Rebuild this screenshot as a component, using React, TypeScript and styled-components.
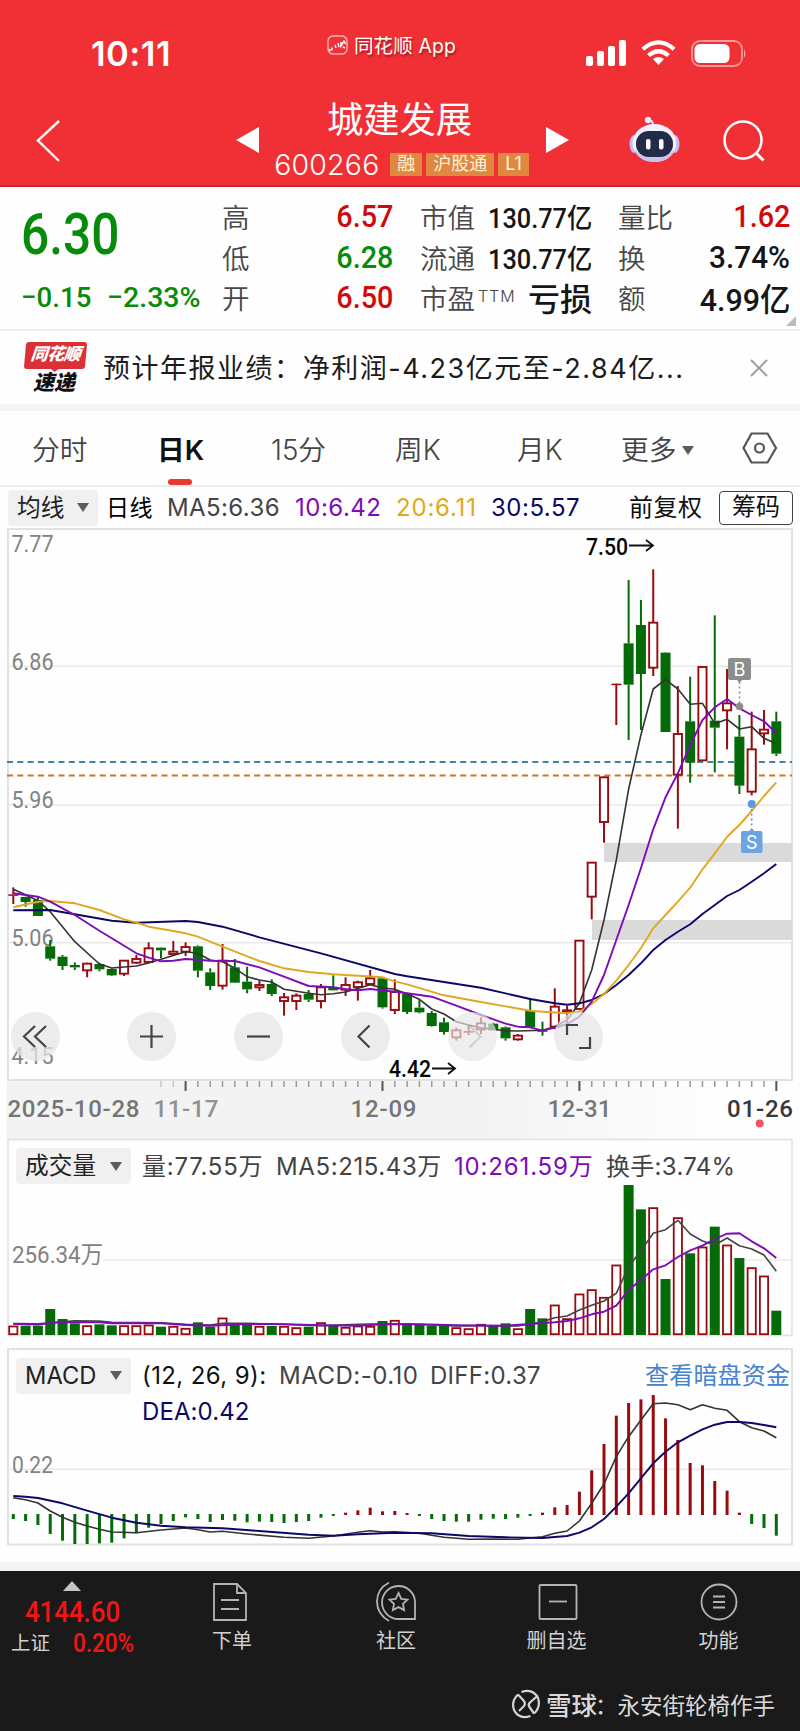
import React from "react";
import styled, { createGlobalStyle } from "styled-components";

const Global = createGlobalStyle`
  * { box-sizing: border-box; }
  body { margin: 0; background: #fff; }
`;

const SANS = `Inter, "Noto Sans CJK SC", sans-serif`;
const DIN = `Roboto, "Noto Sans CJK SC", sans-serif`;
const RED = "#d00a0a";
const GREEN = "#078b0a";
const PURPLE = "#7d0bb8";
const NAVY = "#0c0867";
const GOLD = "#e0a820";

const Page = styled.div`
  width: 800px;
  height: 1731px;
  overflow: hidden;
  display: flex;
  flex-direction: column;
  background: #fefefe;
  font-family: ${SANS};
  color: #222;
  white-space: nowrap;
`;

/* ---------- header ---------- */
const Header = styled.header`
  height: 187px;
  background: #f13035;
  border-bottom: 2px solid #c8282e;
  color: #fff;
`;
const StatusBar = styled.div`
  height: 92px;
  padding-top: 14px;
  display: grid;
  grid-template-columns: 91px 236px 259px 55px 50px 109px;
  align-items: center;
`;
const Clock = styled.div`
  font-size: 34.5px;
  font-weight: 600;
  letter-spacing: 0.5px;
`;
const AppMark = styled.div`
  display: flex;
  align-items: center;
  gap: 6px;
  margin-top: -17px;
  font-size: 19.5px;
  letter-spacing: 0.1px;
  text-shadow: 1px 2px 2px rgba(80, 0, 0, 0.5);
`;
const NavBar = styled.div`
  height: 93px;
  display: grid;
  grid-template-columns: 236px 26px 280px 85px 93px 80px;
`;
const NavSlot = styled.div<{ $top: number; $left?: number }>`
  padding-top: ${(p) => p.$top}px;
  padding-left: ${(p) => p.$left ?? 0}px;
  svg { display: block; }
`;
const Title = styled.div`
  display: flex;
  flex-direction: column;
  align-items: center;
`;
const StockName = styled.div`
  font-size: 36.3px;
  line-height: 40px;
  height: 52px;
  padding-top: 8px;
  padding-right: 5px;
`;
const CodeLine = styled.div`
  display: flex;
  align-items: center;
  gap: 4px;
  height: 42px;
  padding-bottom: 1px;
  padding-right: 1px;
`;
const Code = styled.span`
  font-size: 28.5px;
  font-weight: 300;
  width: 112px;
  letter-spacing: 0.2px;
`;
const Badge = styled.span`
  height: 23px;
  line-height: 22px;
  padding: 0 7px;
  background: #e0883f;
  color: #fff1dd;
  font-size: 18px;
`;

/* ---------- quote ---------- */
const Quote = styled.section`
  height: 144px;
  border-bottom: 2px solid #ececec;
  display: grid;
  grid-template-columns: 222px 171px 27px 172px 26px 172px 10px;
  position: relative;
`;
const PriceBlock = styled.div`
  padding-left: 21px;
  color: ${GREEN};
  font-family: ${DIN};
`;
const Price = styled.div`
  font-size: 57px;
  font-weight: 500;
  line-height: 60px;
  margin-top: 18px;
  transform: scaleX(0.87);
  transform-origin: left;
`;
const Change = styled.div`
  margin-top: 16px;
  font-size: 28.5px;
  font-weight: 500;
  line-height: 34px;
  display: grid;
  grid-template-columns: 86px 110px;
  span { transform: scaleX(0.97); transform-origin: left; }
  span + span { transform: scaleX(1); }
`;
const Metrics = styled.div<{ $col: number }>`
  grid-column: ${(p) => p.$col};
  padding-top: 9px;
`;
const Metric = styled.div`
  height: 40.6px;
  display: flex;
  justify-content: space-between;
  align-items: center;
`;
const Label = styled.span`
  font-size: 27.5px;
  font-weight: 350;
  color: #484848;
  sup { font-size: 16px; vertical-align: 7px; line-height: 0; margin-left: 3px; letter-spacing: 0.9px; }
`;
const Value = styled.span<{ $c?: string; $size?: number; $sx?: number }>`
  font-family: ${DIN};
  font-weight: 500;
  font-size: ${(p) => p.$size ?? 32}px;
  color: ${(p) => p.$c ?? "#161616"};
  transform: scaleX(${(p) => p.$sx ?? 0.9});
  transform-origin: right;
`;
const Corner = styled.i`
  position: absolute;
  right: 4px;
  bottom: 3px;
  border-left: 10px solid transparent;
  border-bottom: 10px solid #bbb;
`;

/* ---------- news ---------- */
const News = styled.section`
  height: 73px;
  display: grid;
  grid-template-columns: 25px 78px 647px 50px;
  align-items: center;
`;
const NewsLogo = styled.div`
  grid-column: 2;
  width: 61px;
  height: 54px;
  margin-top: 2px;
  text-align: center;
  font-weight: 900;
  font-style: italic;
`;
const LogoTop = styled.div`
  height: 27px;
  line-height: 25px;
  border-radius: 3px;
  background: #dc3038;
  color: #fff;
  font-size: 17px;
  letter-spacing: -0.5px;
  transform: skewX(-5deg);
  position: relative;
  &::after {
    content: "";
    position: absolute;
    left: 26px;
    top: 26px;
    border: 5px solid transparent;
    border-top: 4px solid #dc3038;
    border-bottom: 0;
  }
`;
const LogoBottom = styled.div`
  font-size: 21px;
  line-height: 27px;
  color: #111;
  padding-right: 3px;
`;
const NewsText = styled.div`
  font-size: 27px;
  letter-spacing: 1.52px;
  padding-bottom: 2px;
  color: #1c1c1c;
`;
const Band = styled.div<{ $h: number }>`
  height: ${(p) => p.$h}px;
  background: #f4f4f4;
`;

/* ---------- tabs ---------- */
const Tabs = styled.nav`
  height: 76px;
  border-bottom: 2px solid #ebebeb;
  display: grid;
  grid-template-columns: 32px 125px 114px 124px 122px 104px 121px 58px;
  align-items: center;
`;
const Tab = styled.div<{ $on?: boolean; $first?: boolean }>`
  ${(p) => (p.$first ? "grid-column: 2;" : "")}
  height: 74px;
  line-height: 79px;
  font-size: 27.7px;
  font-weight: ${(p) => (p.$on ? 600 : 350)};
  color: ${(p) => (p.$on ? "#111" : "#444")};
  position: relative;
  ${(p) =>
    p.$on
      ? `&::after { content: ""; position: absolute; left: 11px; bottom: 0; width: 24px; height: 6px; border-radius: 3px; background: #e8382f; }`
      : ""}
`;
const Caret = styled.i<{ $w?: number; $ml?: number }>`
  display: inline-block;
  vertical-align: middle;
  margin-left: ${(p) => p.$ml ?? 0}px;
  margin-top: -4px;
  border: ${(p) => p.$w ?? 6.5}px solid transparent;
  border-top: 9px solid #5c5c5c;
  border-bottom: 0;
`;

/* ---------- indicator rows ---------- */
const LegendRow = styled.div<{ $cols: string; $h: number }>`
  height: ${(p) => p.$h}px;
  display: grid;
  grid-template-columns: ${(p) => p.$cols};
  align-items: center;
`;
const Picker = styled.div<{ $w: number; $pad: number }>`
  width: ${(p) => p.$w}px;
  height: 36px;
  padding: 0 9px 0 ${(p) => p.$pad}px;
  border-radius: 4px;
  background: #f0f0f0;
  font-size: 23.7px;
  line-height: 36px;
  color: #222;
  display: flex;
  align-items: center;
  justify-content: space-between;
  i { margin-top: 0; }
`;
const Legend = styled.span<{ $c?: string; $ls?: number; $size?: number }>`
  font-size: ${(p) => p.$size ?? 24}px;
  letter-spacing: ${(p) => p.$ls ?? 0.5}px;
  line-height: 30px;
  margin-top: 1px;
  color: ${(p) => p.$c ?? "#444"};
  font-weight: 400;
`;
const ChipButton = styled.div`
  width: 74px;
  height: 34px;
  line-height: 30px;
  border: 1.5px solid #444;
  border-radius: 4px;
  text-align: center;
  font-size: 24px;
  color: #111;
`;

/* ---------- charts ---------- */
const ChartBox = styled.div<{ $h: number }>`
  position: relative;
  height: ${(p) => p.$h}px;
  margin: 0 7px;
  > svg { display: block; position: absolute; inset: 0; overflow: visible; }
`;
const Overlay = styled.div`
  position: relative;
  margin-left: -7px;
`;
const Controls = styled.div`
  position: absolute;
  left: 3.5px;
  bottom: 19px;
  display: flex;
  gap: 57.8px;
`;
const RoundButton = styled.div<{ $ghost?: boolean; $first?: boolean }>`
  width: 49px;
  height: 49px;
  border-radius: 50%;
  margin-right: ${(p) => (p.$first ? 10 : 0)}px;
  background: rgba(230, 230, 230, ${(p) => (p.$ghost ? 0.68 : 0.75)});
  svg { display: block; opacity: ${(p) => (p.$ghost ? 0.18 : 1)}; }
`;
const Axis = styled.div`
  height: 59px;
  margin-left: 7px;
  background: linear-gradient(90deg, #f3f3f3 0, #f3f3f3 60%, #fefefe 90%);
  svg { display: block; }
`;
const Spacer = styled.div<{ $h: number }>`
  height: ${(p) => p.$h}px;
`;

/* ---------- bottom ---------- */
const Bottom = styled.footer`
  height: 160px;
  background: #1a1a1a;
  color: #d2d2d2;
`;
const Actions = styled.div`
  height: 96px;
  display: grid;
  grid-template-columns: 144px 176px 152px 169px 155px;
`;
const IndexCell = styled.div`
  font-family: ${DIN};
  color: #f51414;
  display: flex;
  flex-direction: column;
  align-items: center;
  padding-top: 10px;
`;
const UpMark = styled.i`
  border: 9px solid transparent;
  border-bottom: 10px solid #c4c4c4;
  border-top: 0;
`;
const IndexValue = styled.div`
  font-size: 29px;
  font-weight: 500;
  line-height: 42px;
  height: 41px;
  transform: scaleX(0.89);
`;
const IndexLine = styled.div`
  width: 144px;
  padding-left: 11px;
  line-height: 24px;
  font-size: 25px;
  font-weight: 500;
  display: grid;
  grid-template-columns: 62px 80px;
  span { color: #d2d2d2; font-size: 19.5px; font-weight: 400; }
  b { font-weight: 500; transform: scaleX(0.9); transform-origin: left; }
`;
const Action = styled.div`
  display: flex;
  flex-direction: column;
  align-items: center;
  padding-top: 10px;
  font-size: 20px;
  line-height: 33px;
  svg { display: block; margin-bottom: 2px; }
`;
const Credit = styled.div`
  display: flex;
  align-items: center;
  justify-content: flex-end;
  padding: 17px 25px 0 0;
  height: 56px;
  font-size: 22.5px;
  color: #dadada;
  b { font-size: 25.5px; font-weight: 500; margin: 0 -2px 0 5px; }
`;

/* ---------- data: high, body top, body bottom, low in third-pixels ---------- */
const X = (i: number) => 13.3 + 12.3065 * i;
type Candle = [string, number, number, number, number];
const candles: Candle[] = [
  ["r", 82, 103, 107, 132], ["g", 110, 111, 126, 140], ["g", 110, 120, 168, 168], ["g", 240, 259, 296, 302],
  ["g", 285, 290, 318, 330], ["g", 307, 315, 322, 330], ["r", 308, 311, 331, 352], ["g", 308, 312, 328, 334],
  ["g", 325, 327, 346, 348], ["r", 300, 302, 341, 348], ["r", 285, 297, 308, 312], ["r", 247, 265, 306, 306],
  ["g", 262, 263, 271, 294], ["r", 243, 275, 282, 282], ["r", 247, 261, 275, 288], ["g", 256, 259, 332, 352],
  ["g", 325, 337, 378, 390], ["r", 252, 302, 377, 389], ["g", 297, 322, 368, 369], ["g", 320, 365, 388, 400],
  ["r", 362, 375, 382, 393], ["g", 358, 372, 402, 408], ["r", 399, 412, 423, 467], ["r", 400, 407, 423, 450],
  ["g", 390, 402, 419, 426], ["r", 372, 382, 423, 445], ["g", 346, 383, 391, 391], ["r", 352, 375, 389, 408],
  ["r", 362, 367, 381, 422], ["r", 330, 355, 372, 372], ["g", 352, 355, 442, 446], ["r", 358, 396, 450, 462],
  ["g", 400, 402, 456, 462], ["g", 418, 443, 457, 460], ["g", 453, 459, 498, 500], ["g", 473, 487, 516, 524],
  ["r", 503, 511, 532, 542], ["r", 495, 513, 518, 525], ["r", 472, 490, 508, 522], ["g", 488, 491, 511, 511],
  ["g", 499, 502, 535, 542], ["r", 522, 527, 538, 542], ["g", 415, 452, 502, 502], ["g", 485, 511, 514, 527],
  ["r", 385, 440, 500, 508], ["r", 438, 451, 457, 525], ["r", 240, 242, 447, 447], ["r", 7, 8, 110, 178],
  ["r", -250, -248, -114, -52], ["r", -530, -529, -527, -405], ["g", -840, -650, -526, -360], ["g", -780, -705, -558, -390],
  ["r", -872, -712, -577, -552], ["g", -623, -622, -384, -384], ["r", -522, -378, -256, -94], ["g", -550, -416, -292, -232],
  ["r", -580, -579, -299, -299], ["g", -734, -418, -397, -263], ["r", -573, -470, -449, -332], ["g", -435, -370, -223, -198],
  ["r", -445, -332, -205, -194], ["r", -450, -391, -380, -346], ["g", -445, -416, -319, -312],
];
const ma5 = "0:88 1:104 2:122 3:155 5:245 7:312 8:324 10:318 11:309 14:275 15:280 16:300 17:305 18:325 19:350 20:360 21:366 22:388 24:400 25:404 26:401 27:396 29:374 30:384 31:388 32:402 33:418 34:447 35:462 36:485 37:495 38:503 40:512 41:513 43:511 44:500 45:480 46:430 47:330 48:180 49:0 50:-212 51:-375 52:-513 53:-541 54:-513 55:-467 56:-470 57:-409 58:-422 59:-393 60:-400 61:-365 62:-349";
const ma10 = "0:100 2:110 3:125 5:165 7:212 8:235 10:280 11:293 12:304 13:302 14:297 15:299 16:302 18:303 20:322 22:350 24:378 26:382 27:388 28:391 29:387 31:395 32:400 34:410 36:437 38:465 40:491 41:500 42:502 43:512 44:503 45:492 46:470 47:425 48:345 49:240 50:135 51:25 52:-92 53:-188 54:-260 55:-345 56:-420 57:-458 58:-483 59:-455 60:-435 61:-416 62:-380";
const ma20 = "0:142 2:125 3:123 5:130 7:150 9:178 10:188 11:200 13:213 14:220 15:230 17:260 20:303 22:325 24:336 26:343 28:347 30:352 31:364 32:373 35:406 38:426 42:452 43:455 45:460 46:455 47:432 48:402 49:362 50:315 51:265 52:205 53:165 54:125 55:83 56:28 57:-20 58:-70 59:-105 60:-147 61:-192 62:-233";
const ma30 = "0:151 3:150 5:163 8:182 10:188 14:183 15:186 17:200 20:232 25:280 31:342 32:349 38:383 42:417 44:430 45:434 46:430 47:420 48:402 49:375 50:345 51:310 52:270 53:240 54:215 55:193 56:162 57:135 58:108 59:90 60:65 61:40 62:12";
const volumes = [587, 587, 587, 537, 567, 580, 586, 583, 586, 586, 586, 584, 590, 588, 594, 577, 590, 563, 584, 582, 588, 588, 588, 592, 590, 577, 588, 591, 587, 588, 573, 570, 580, 585, 588, 588, 592, 595, 582, 588, 580, 595, 537, 565, 524, 565, 491, 478, 501, 404, 165, 238, 232, 447, 262, 370, 350, 290, 344, 384, 412, 437, 542];
const vol5 = "0:582 2:584 4:575 5:572 7:573 8:577 12:578 14:583 16:585 17:580 19:580 22:583 25:587 28:583 29:582 32:582 36:588 38:587 41:588 43:575 44:563 45:558 46:540 47:526 48:513 49:490 50:410 51:362 52:310 53:299 54:271 55:312 56:333 57:345 58:324 59:347 60:357 61:375 62:424";
const vol10 = "0:581 2:582 4:576 7:577 8:580 12:580 14:585 16:587 19:582 22:583 25:586 28:587 30:583 33:583 36:586 40:587 42:582 44:577 45:573 46:565 47:553 48:545 49:527 50:480 51:450 52:418 53:406 54:381 55:361 56:347 57:327 58:311 59:310 60:334 61:355 62:384";
const macd = [537, 543, 555, 582, 602, 612, 612, 610, 608, 595, 580, 563, 552, 543, 532, 537, 546, 540, 542, 547, 545, 546, 549, 546, 543, 533, 528, 518, 511, 503, 514, 513, 519, 528, 537, 543, 545, 545, 539, 536, 537, 533, 528, 518, 502, 495, 455, 391, 312, 227, 189, 178, 165, 235, 300, 369, 376, 423, 452, 518, 552, 564, 587];
const diff = "0:473 1:479 2:489 3:513 4:532 5:547 6:558 7:568 8:576 10:578 12:570 14:564 15:569 16:576 17:574 19:582 22:592 24:595 26:588 28:577 29:572 30:576 31:575 33:580 35:592 37:598 39:597 41:598 42:594 43:590 44:580 45:573 46:543 47:490 48:432 49:350 50:290 51:240 52:191 53:189 54:194 55:209 56:194 57:205 58:211 59:245 60:263 61:273 62:293";
const dea = "0:468 1:470 2:474 4:490 6:512 8:533 10:548 12:557 14:562 17:565 20:573 24:584 26:587 28:583 31:578 34:580 37:588 40:592 43:594 45:588 46:578 47:562 48:537 49:500 50:460 51:415 52:370 53:335 54:307 55:287 56:268 57:254 58:246 59:246 60:249 61:255 62:262";

function Line({ pts, y, c, w = 1.9 }: { pts: string; y: (v: number) => number; c: string; w?: number }) {
  const points = pts
    .split(" ")
    .map((p) => p.split(":").map(Number))
    .map(([i, v]) => `${X(i).toFixed(1)},${y(v).toFixed(1)}`)
    .join(" ");
  return <polyline points={points} fill="none" stroke={c} strokeWidth={w} strokeLinejoin="round" />;
}

interface TextProps {
  x: number;
  y: number;
  w: number;
  s?: number;
  c?: string;
  weight?: number;
  f?: string;
  spaced?: boolean;
  children: string;
}
const T = ({ x, y, w, s = 24, c = "#828282", weight = 400, f = DIN, spaced, children }: TextProps) => (
  <text x={x} y={y} textLength={w} lengthAdjust={spaced ? "spacing" : "spacingAndGlyphs"} fontSize={s} fill={c} fontWeight={weight} fontFamily={f}>
    {children}
  </text>
);

const DARK_GREEN = "#056b08";
const DARK_RED = "#990a0e";

function PriceChart() {
  const y = (v: number) => 860 + v / 3;
  return (
    <svg width="786" height="552" viewBox="7 528 786 552">
      <rect x="8" y="529" width="784" height="551" fill="none" stroke="#e2e2e2" strokeWidth="2" />
      {[666.3, 805, 942.8].map((g) => (
        <line key={g} x1="8" x2="792" y1={g} y2={g} stroke="#e9e9e9" strokeWidth="1.6" />
      ))}
      <rect x="604" y="843" width="188" height="19" fill="#dadada" />
      <rect x="592" y="920" width="200" height="20" fill="#dadada" />
      <line x1="7" x2="792" y1="762" y2="762" stroke="#3f82a6" strokeWidth="1.8" strokeDasharray="6 4.3" />
      <line x1="7" x2="792" y1="775.5" y2="775.5" stroke="#cf7420" strokeWidth="1.8" strokeDasharray="6 4.3" />
      <T x={11.5} y={552} w={42}>7.77</T>
      <T x={11.5} y={670} w={42}>6.86</T>
      <T x={11.5} y={808} w={42}>5.96</T>
      <T x={11.5} y={946} w={42}>5.06</T>
      <T x={11.5} y={1064} w={42}>4.15</T>
      {candles.map(([k, h, a, b, l], i) => {
        const c = k === "g" ? DARK_GREEN : DARK_RED;
        const x = X(i);
        const hollow = k === "r" && b - a > 5;
        return (
          <g key={i} stroke={c}>
            <line x1={x} x2={x} y1={y(h)} y2={y(a)} strokeWidth="2" />
            <line x1={x} x2={x} y1={y(b)} y2={y(l)} strokeWidth="2" />
            {hollow ? (
              <rect x={x - 4.1} y={y(a)} width="8.2" height={Math.max(1.5, y(b) - y(a))} fill="#fff" strokeWidth="1.9" />
            ) : (
              <rect x={x - 5} y={y(a)} width="10" height={Math.max(1.5, y(b) - y(a))} fill={c} stroke="none" />
            )}
          </g>
        );
      })}
      <Line pts={ma5} y={y} c="#333" w={1.6} />
      <Line pts={ma30} y={y} c={NAVY} />
      <Line pts={ma20} y={y} c={GOLD} />
      <Line pts={ma10} y={y} c={PURPLE} />
      <T x={586} y={554.5} w={42} s={23.5} c="#050505" weight={500}>7.50</T>
      <path d="M629 545.5h23M646 540l7 5.5-7 5.5" fill="none" stroke="#111" strokeWidth="1.8" />
      <T x={389} y={1077} w={42} s={23.5} c="#050505" weight={500}>4.42</T>
      <path d="M432 1068.5h23M448 1063l7 5.5-7 5.5" fill="none" stroke="#111" strokeWidth="1.8" />
      <circle cx="739.5" cy="706.5" r="3.8" fill="#8d8d8d" />
      <path d="M739.5 682v22" stroke="#888" strokeWidth="1.5" strokeDasharray="1.8 3" />
      <path d="M730 658h19q2 0 2 2v18q0 2-2 2h-7l-2.5 3-2.5-3h-7q-2 0-2-2v-18q0-2 2-2" fill="#8d8d8d" />
      <T x={733.5} y={676} w={12} s={19} c="#fff" f={SANS}>B</T>
      <circle cx="751.7" cy="804" r="4" fill="#5c9ae0" />
      <path d="M751.7 809v18" stroke="#5c84b8" strokeWidth="1.5" strokeDasharray="1.8 3" />
      <path d="M743 831h6.2l2.5-3 2.5 3h6.3q2 0 2 2v18q0 2-2 2h-17.5q-2 0-2-2v-18q0-2 2-2" fill="#6ba3e4" />
      <T x={746} y={849} w={11.5} s={19} c="#fff" f={SANS}>S</T>
    </svg>
  );
}

function TimeAxis() {
  return (
    <svg width="793" height="59" viewBox="7 1080 793 59">
      {Array.from({ length: 51 }, (_, k) => k + 12).map((i) => {
        const major = i % 16 === 14;
        return (
          <line key={i} x1={X(i)} x2={X(i)} y1="1081" y2={major ? 1091 : 1087} stroke={major ? "#555" : "#9a9a9a"} strokeWidth={major ? 2 : 1.5} opacity={i < 14 ? 0.5 : 1} />
        );
      })}
      <T x={7.5} y={1117} w={132} c="#757575" weight={500} spaced>2025-10-28</T>
      <T x={153.5} y={1117} w={65} c="#919191" weight={500} spaced>11-17</T>
      <T x={350.5} y={1117} w={66} c="#757575" weight={500} spaced>12-09</T>
      <T x={547.5} y={1117} w={64} c="#757575" weight={500} spaced>12-31</T>
      <T x={727} y={1117} w={66} c="#383838" weight={500} spaced>01-26</T>
      <circle cx="759.7" cy="1123.5" r="4" fill="#ee5560" />
    </svg>
  );
}

function VolumeChart() {
  const y = (v: number) => 1130 + v / 3;
  return (
    <svg width="786" height="197" viewBox="7 1139 786 197">
      <rect x="8" y="1139.5" width="784" height="196" fill="none" stroke="#e2e2e2" strokeWidth="1.6" />
      <line x1="103" x2="792" y1="1260" y2="1260" stroke="#e9e9e9" strokeWidth="1.6" />
      <T x={12} y={1263} w={91} s={23.5}>256.34万</T>
      {volumes.map((v, i) =>
        candles[i][0] === "g" ? (
          <rect key={i} x={X(i) - 5} y={y(v)} width="10" height={1335 - y(v)} fill={DARK_GREEN} />
        ) : (
          <rect key={i} x={X(i) - 4.1} y={y(v) + 0.8} width="8.2" height={1333.4 - y(v)} fill="#fff" stroke={DARK_RED} strokeWidth="1.8" />
        ),
      )}
      <Line pts={vol5} y={y} c="#444" w={1.6} />
      <Line pts={vol10} y={y} c={PURPLE} />
    </svg>
  );
}

function MacdChart() {
  const y = (v: number) => 1340 + v / 3;
  return (
    <svg width="786" height="197" viewBox="7 1348 786 197">
      <rect x="8" y="1349" width="784" height="195.5" fill="none" stroke="#e2e2e2" strokeWidth="2" />
      <line x1="8" x2="792" y1="1469.3" y2="1469.3" stroke="#e9e9e9" strokeWidth="1.4" />
      <T x={12} y={1472.5} w={41}>0.22</T>
      {macd.map((v, i) => (
        <line key={i} x1={X(i)} x2={X(i)} y1={v > 523 ? y(522) : y(525)} y2={y(v)} stroke={v > 523 ? DARK_GREEN : DARK_RED} strokeWidth="3" />
      ))}
      <Line pts={diff} y={y} c="#333" w={1.6} />
      <Line pts={dea} y={y} c={NAVY} />
    </svg>
  );
}

const ControlIcon = ({ d }: { d: string }) => (
  <svg width="49" height="49" viewBox="0 0 49 49" fill="none" stroke="#444" strokeWidth="2.2">
    <path d={d} />
  </svg>
);

const line = { fill: "none", stroke: "#b4b4b4", strokeWidth: 1.8 } as const;

export default function App() {
  return (
    <Page>
      <Global />
      <Header>
        <StatusBar>
          <span />
          <Clock>10:11</Clock>
          <AppMark>
            <svg width="21" height="20" viewBox="0 0 21 20" fill="none" stroke="#fff">
              <rect x="1" y="1" width="19" height="18" rx="5" strokeOpacity="0.65" strokeWidth="1.4" />
              <path d="M2 14l1.5 2M5 12.5v3M8 10l1 3M11 8l1 4M14 7v4l3-5 1.5 3M16 12l2 1" strokeWidth="1.5" />
            </svg>
            同花顺 App
          </AppMark>
          <svg width="41" height="26" fill="#fff">
            <rect x="0" y="16" width="7" height="10" rx="2" />
            <rect x="11" y="11" width="7" height="15" rx="2" />
            <rect x="22" y="6" width="7" height="20" rx="2" />
            <rect x="33" y="0" width="7" height="26" rx="2" />
          </svg>
          <svg width="35" height="26" viewBox="0 0 35 26" fill="none" stroke="#fff" strokeWidth="4.2">
            <path d="M1.8 9.2Q17.5-4.5 33.2 9.2" />
            <path d="M7.5 15.5Q17.5 7 27.5 15.5" />
            <path d="M17.5 25l-5.5-6q5.5-4 11 0z" fill="#fff" stroke="none" />
          </svg>
          <svg width="56" height="27" viewBox="0 0 56 27">
            <rect x="1" y="1" width="50" height="25" rx="8" fill="none" stroke="#fff" strokeOpacity="0.5" strokeWidth="1.8" />
            <rect x="3.5" y="4" width="35" height="19" rx="5.5" fill="#fff" />
            <path d="M53 9q3 4.5 0 9z" fill="#fff" opacity="0.55" />
          </svg>
        </StatusBar>
        <NavBar>
          <NavSlot $top={28} $left={36}>
            <svg width="26" height="42" fill="none" stroke="#fff" strokeWidth="2.4"><path d="M23 1L2 20.5 23 41" /></svg>
          </NavSlot>
          <NavSlot $top={35}>
            <svg width="24" height="27" fill="#fff"><path d="M23 0v26L0 13z" /></svg>
          </NavSlot>
          <Title>
            <StockName>城建发展</StockName>
            <CodeLine>
              <Code>600266</Code>
              <Badge>融</Badge>
              <Badge>沪股通</Badge>
              <Badge>L1</Badge>
            </CodeLine>
          </Title>
          <NavSlot $top={35} $left={4}>
            <svg width="24" height="27" fill="#fff"><path d="M0 0v26l23-13z" /></svg>
          </NavSlot>
          <NavSlot $top={24} $left={2}>
            <svg width="51" height="48" viewBox="0 0 51 48">
              <path d="M24 9q0-5-5-5" fill="none" stroke="#e6e2ff" strokeWidth="2" />
              <circle cx="19" cy="4" r="3.2" fill="#efeaff" />
              <ellipse cx="5" cy="28" rx="4.5" ry="9" fill="#c2bcf2" />
              <ellipse cx="46" cy="28" rx="4.5" ry="9" fill="#c2bcf2" />
              <ellipse cx="25.5" cy="27" rx="22" ry="19" fill="#f3f0ff" />
              <path d="M5 33q5 13 20.5 13T46 33q-8 8-20.5 8T5 33z" fill="#c9c3f5" />
              <rect x="7" y="15" width="37" height="26" rx="12.5" fill="#222c48" />
              <rect x="17" y="23" width="4.5" height="10.5" rx="2" fill="#fff" />
              <rect x="30" y="23" width="4.5" height="10.5" rx="2" fill="#fff" />
            </svg>
          </NavSlot>
          <NavSlot $top={28} $left={2}>
            <svg width="44" height="42" fill="none" stroke="#fff" strokeWidth="2.5"><circle cx="21" cy="20" r="18.5" /><path d="M34 33l7.5 7.5" strokeWidth="3" /></svg>
          </NavSlot>
        </NavBar>
      </Header>

      <Quote>
        <PriceBlock>
          <Price>6.30</Price>
          <Change><span>−0.15</span><span>−2.33%</span></Change>
        </PriceBlock>
        <Metrics $col={2}>
          <Metric><Label>高</Label><Value $c={RED}>6.57</Value></Metric>
          <Metric><Label>低</Label><Value $c={GREEN}>6.28</Value></Metric>
          <Metric><Label>开</Label><Value $c={RED}>6.50</Value></Metric>
        </Metrics>
        <Metrics $col={4}>
          <Metric><Label>市值</Label><Value $size={27.5} $sx={0.92}>130.77亿</Value></Metric>
          <Metric><Label>流通</Label><Value $size={27.5} $sx={0.92}>130.77亿</Value></Metric>
          <Metric><Label>市盈<sup>TTM</sup></Label><Value $sx={1}>亏损</Value></Metric>
        </Metrics>
        <Metrics $col={6}>
          <Metric><Label>量比</Label><Value $c={RED}>1.62</Value></Metric>
          <Metric><Label>换</Label><Value $sx={0.93}>3.74%</Value></Metric>
          <Metric><Label>额</Label><Value $sx={0.95}>4.99亿</Value></Metric>
        </Metrics>
        <Corner />
      </Quote>

      <News>
        <NewsLogo>
          <LogoTop>同花顺</LogoTop>
          <LogoBottom>速递</LogoBottom>
        </NewsLogo>
        <NewsText>预计年报业绩：净利润-4.23亿元至-2.84亿...</NewsText>
        <svg width="18" height="18" fill="none" stroke="#999" strokeWidth="1.8"><path d="M1 1l16 16M17 1L1 17" /></svg>
      </News>
      <Band $h={7} />

      <Tabs>
        <Tab $first>分时</Tab>
        <Tab $on>日K</Tab>
        <Tab>15分</Tab>
        <Tab>周K</Tab>
        <Tab>月K</Tab>
        <Tab>更多<Caret $ml={6} /></Tab>
        <svg width="36" height="32" viewBox="0 0 36 32" fill="none" stroke="#555" strokeWidth="2.2">
          <path d="M9.5 1.5h16L34 16l-8.5 14.5h-16L1.5 16z" />
          <circle cx="17.5" cy="16" r="4.5" />
        </svg>
      </Tabs>

      <LegendRow $h={41} $cols="8px 98px 61px 128px 101px 95px 138px 90px 74px">
        <span />
        <Picker $w={90} $pad={9}>均线<Caret /></Picker>
        <Legend $c="#000" $size={23}>日线</Legend>
        <Legend $ls={0.4}>MA5:6.36</Legend>
        <Legend $c={PURPLE} $ls={0.5}>10:6.42</Legend>
        <Legend $c={GOLD} $ls={0.8}>20:6.11</Legend>
        <Legend $c={NAVY} $ls={0.5}>30:5.57</Legend>
        <Legend $c="#111">前复权</Legend>
        <ChipButton>筹码</ChipButton>
      </LegendRow>

      <ChartBox $h={552}>
        <PriceChart />
        <Controls>
          <RoundButton $first><ControlIcon d="M24 14L13 24.5 24 35M35 14L24 24.5 35 35" /></RoundButton>
          <RoundButton><ControlIcon d="M13 24.5h23M24.5 13v23" /></RoundButton>
          <RoundButton><ControlIcon d="M13 24.5h23" /></RoundButton>
          <RoundButton><ControlIcon d="M28.5 13.5L17.5 24.5l11 11" /></RoundButton>
          <RoundButton $ghost><ControlIcon d="M21.5 13.5l11 11-11 11" /></RoundButton>
          <RoundButton><ControlIcon d="M13 23V13h11M36 25v11H25" /></RoundButton>
        </Controls>
      </ChartBox>
      <Axis><TimeAxis /></Axis>

      <ChartBox $h={197}>
        <VolumeChart />
        <Overlay>
          <Spacer $h={7} />
          <LegendRow $h={40} $cols="16px 126px 134px 178px 152px 1fr">
            <span />
            <Picker $w={115} $pad={9}>成交量<Caret /></Picker>
            <Legend $ls={0.75}>量:77.55万</Legend>
            <Legend $ls={0.6}>MA5:215.43万</Legend>
            <Legend $c={PURPLE} $ls={0.85}>10:261.59万</Legend>
            <Legend $ls={0.3}>换手:3.74%</Legend>
          </LegendRow>
        </Overlay>
      </ChartBox>
      <Spacer $h={12} />
      <ChartBox $h={197}>
        <MacdChart />
        <Overlay>
          <Spacer $h={7} />
          <LegendRow $h={41} $cols="16px 126px 137px 151px 215px 1fr">
            <span />
            <Picker $w={115} $pad={9}>MACD<Caret /></Picker>
            <Legend $c="#111" $ls={0.4}>(12, 26, 9):</Legend>
            <Legend>MACD:-0.10</Legend>
            <Legend $ls={0.3}>DIFF:0.37</Legend>
            <Legend $c="#4583cf" $ls={0.2}>查看暗盘资金</Legend>
          </LegendRow>
          <LegendRow $h={26} $cols="142px 1fr">
            <span />
            <Legend $c={NAVY} $ls={0.1}>DEA:0.42</Legend>
          </LegendRow>
        </Overlay>
      </ChartBox>
      <Spacer $h={17} />
      <Band $h={9} />

      <Bottom>
        <Actions>
          <IndexCell>
            <UpMark />
            <IndexValue>4144.60</IndexValue>
            <IndexLine><span>上证</span><b>0.20%</b></IndexLine>
          </IndexCell>
          <Action>
            <svg width="40" height="42" viewBox="0 0 40 42" {...line}>
              <path d="M2 3h23l9 9v27H2zM25 3v9h9M9 19h18M9 28h18" />
            </svg>
            下单
          </Action>
          <Action>
            <svg width="44" height="42" viewBox="0 0 44 42" {...line}>
              <path d="M41 38V20.5A16.5 16.5 0 1 0 24.5 38zM15 1.5Q3 8 3 20.5T15 40" />
              <path d="M24.5 12l2.8 5.8 6.2.8-4.5 4.3 1.1 6.2-5.6-3-5.6 3 1.1-6.2-4.5-4.3 6.2-.8z" />
            </svg>
            社区
          </Action>
          <Action>
            <svg width="42" height="42" viewBox="0 0 42 42" {...line}>
              <rect x="3.5" y="4" width="37" height="34" rx="1" />
              <path d="M13 20.5h18" />
            </svg>
            删自选
          </Action>
          <Action>
            <svg width="42" height="42" viewBox="0 0 42 42" {...line}>
              <circle cx="21" cy="21" r="17.5" />
              <path d="M15 15.5h12M15 21h12M15 26.5h12" />
            </svg>
            功能
          </Action>
        </Actions>
        <Credit>
          <svg width="30" height="30" viewBox="0 0 30 30" fill="none" stroke="#d4d4d4" strokeWidth="2.2">
            <path d="M10.5 3Q22-1 27 9q3 9-4 15.5M19.5 27Q8 31 3 21 0 12 7 5.5" />
            <path d="M7 5.5l6 6.5q2 3-.5 5.5L8 22M27 6.5l-7.5 6.5q-3 2.5-1 5l4.5 6.5" />
          </svg>
          <b>雪球</b>：永安街轮椅作手
        </Credit>
      </Bottom>
    </Page>
  );
}
